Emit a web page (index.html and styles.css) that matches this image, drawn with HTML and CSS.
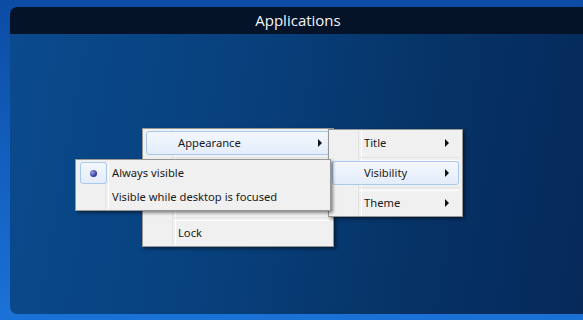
FILE: index.html
```html
<!DOCTYPE html>
<html>
<head lang="en">
    <meta charset="UTF-8">
    <title>Applications</title>
    <link rel="stylesheet" href="styles.css">
</head>
<body>
<div class="screen">
    <div class="window">
        <div class="titlebar">Applications</div>
        <div class="content"></div>
    </div>

    <!-- main context menu -->
    <ul class="menu menu-main">
        <li class="item hover">Appearance<span class="arrow"></span></li>
        <li class="sep"></li>
        <li class="item">&nbsp;</li>
        <li class="sep"></li>
        <li class="item">&nbsp;</li>
        <li class="sep"></li>
        <li class="item">Lock</li>
    </ul>

    <!-- appearance submenu -->
    <ul class="menu menu-appearance">
        <li class="item">Title<span class="arrow"></span></li>
        <li class="sep"></li>
        <li class="item hover">Visibility<span class="arrow"></span></li>
        <li class="sep"></li>
        <li class="item">Theme<span class="arrow"></span></li>
    </ul>

    <!-- visibility submenu -->
    <ul class="menu menu-visibility">
        <li class="item checked"><span class="check"><span class="dot"></span></span>Always visible</li>
        <li class="item">Visible while desktop is focused</li>
    </ul>
</div>
</body>
</html>
```

FILE: styles.css
```css
*{margin: 0; padding: 0; box-sizing: border-box;}
ul,ol{list-style:none;}
body {
    background: #0d4ea6;
    font-family: "Noto Sans", "Open Sans", sans-serif;
}
.screen {
    width: 583px;
    height: 320px;
    position: relative;
    overflow: hidden;
    padding: 7px 0 6px 10px;
    background: linear-gradient(to bottom, #0c4ca4 0%, #1462c4 60%, #1b72d6 100%);
}
.window {
    height: 100%;
    display: flex;
    flex-direction: column;
    border-radius: 7px 0 0 7px;
    overflow: hidden;
}
.titlebar {
    height: 27px;
    background: #041327;
    color: #f4f6fa;
    font-family: "Open Sans", sans-serif;
    font-size: 15px;
    line-height: 26px;
    text-align: center;
    padding-left: 3px;
}
.content {
    flex: 1;
    background: linear-gradient(100deg, #0a4a8d 0%, #08407c 40%, #063366 70%, #06295a 100%);
}

/* menus */
.menu {
    position: absolute;
    background: #f0f0f0;
    border: 1px solid #979797;
    box-shadow: 2px 2px 3px rgba(0,0,0,0.45);
    font-size: 11.2px;
    color: #1a1a1a;
    padding: 1px 3px;
}
.menu::before {     /* icon gutter line */
    content: "";
    position: absolute;
    top: 1px;
    bottom: 1px;
    width: 2px;
    border-left: 1px solid #e2e3e3;
    border-right: 1px solid #fff;
}
.menu .item {
    height: 24px;
    line-height: 22px;
    position: relative;
    border: 1px solid transparent;
    border-radius: 3px;
}
.menu .item.hover {
    border-color: #a8c8ee;
    background: linear-gradient(to bottom, #f4f8fd, #e3edfa);
}
.menu .sep {
    height: 6px;
    position: relative;
}
.menu .sep::after {
    content: "";
    position: absolute;
    left: 27px;
    right: 0;
    top: 2px;
    height: 2px;
    border-top: 1px solid #e2e3e3;
    border-bottom: 1px solid #fff;
}
.menu .arrow {
    position: absolute;
    top: 7px;
    width: 0;
    height: 0;
    border-top: 4px solid transparent;
    border-bottom: 4px solid transparent;
    border-left: 4px solid #111;
}

.menu-main {
    left: 142px;
    top: 128px;
    width: 192px;
    padding-top: 2px;
}
.menu-main::before { left: 29px; }
.menu-main .item { padding-left: 31px; }
.menu-main .arrow { right: 7px; }

.menu-appearance {
    left: 328px;
    top: 129px;
    width: 135px;
}
.menu-appearance::before { left: 29px; }
.menu-appearance .item { padding-left: 31px; }
.menu-appearance .arrow { right: 9px; }

.menu-visibility {
    left: 75px;
    top: 159px;
    width: 256px;
}
.menu-visibility::before { left: 29px; }
.menu-visibility .item { padding-left: 32px; }
.menu-visibility .check {
    position: absolute;
    left: 0;
    top: 0;
    width: 27px;
    height: 22px;
    border: 1px solid #a8c8ee;
    border-radius: 3px;
    background: linear-gradient(to bottom, #f4f8fd, #e3edfa);
}
.menu-visibility .dot {
    position: absolute;
    left: 9px;
    top: 7px;
    width: 7px;
    height: 7px;
    border-radius: 50%;
    background: radial-gradient(circle at 35% 35%, #9aa0e6, #2d3195 70%);
}
```
